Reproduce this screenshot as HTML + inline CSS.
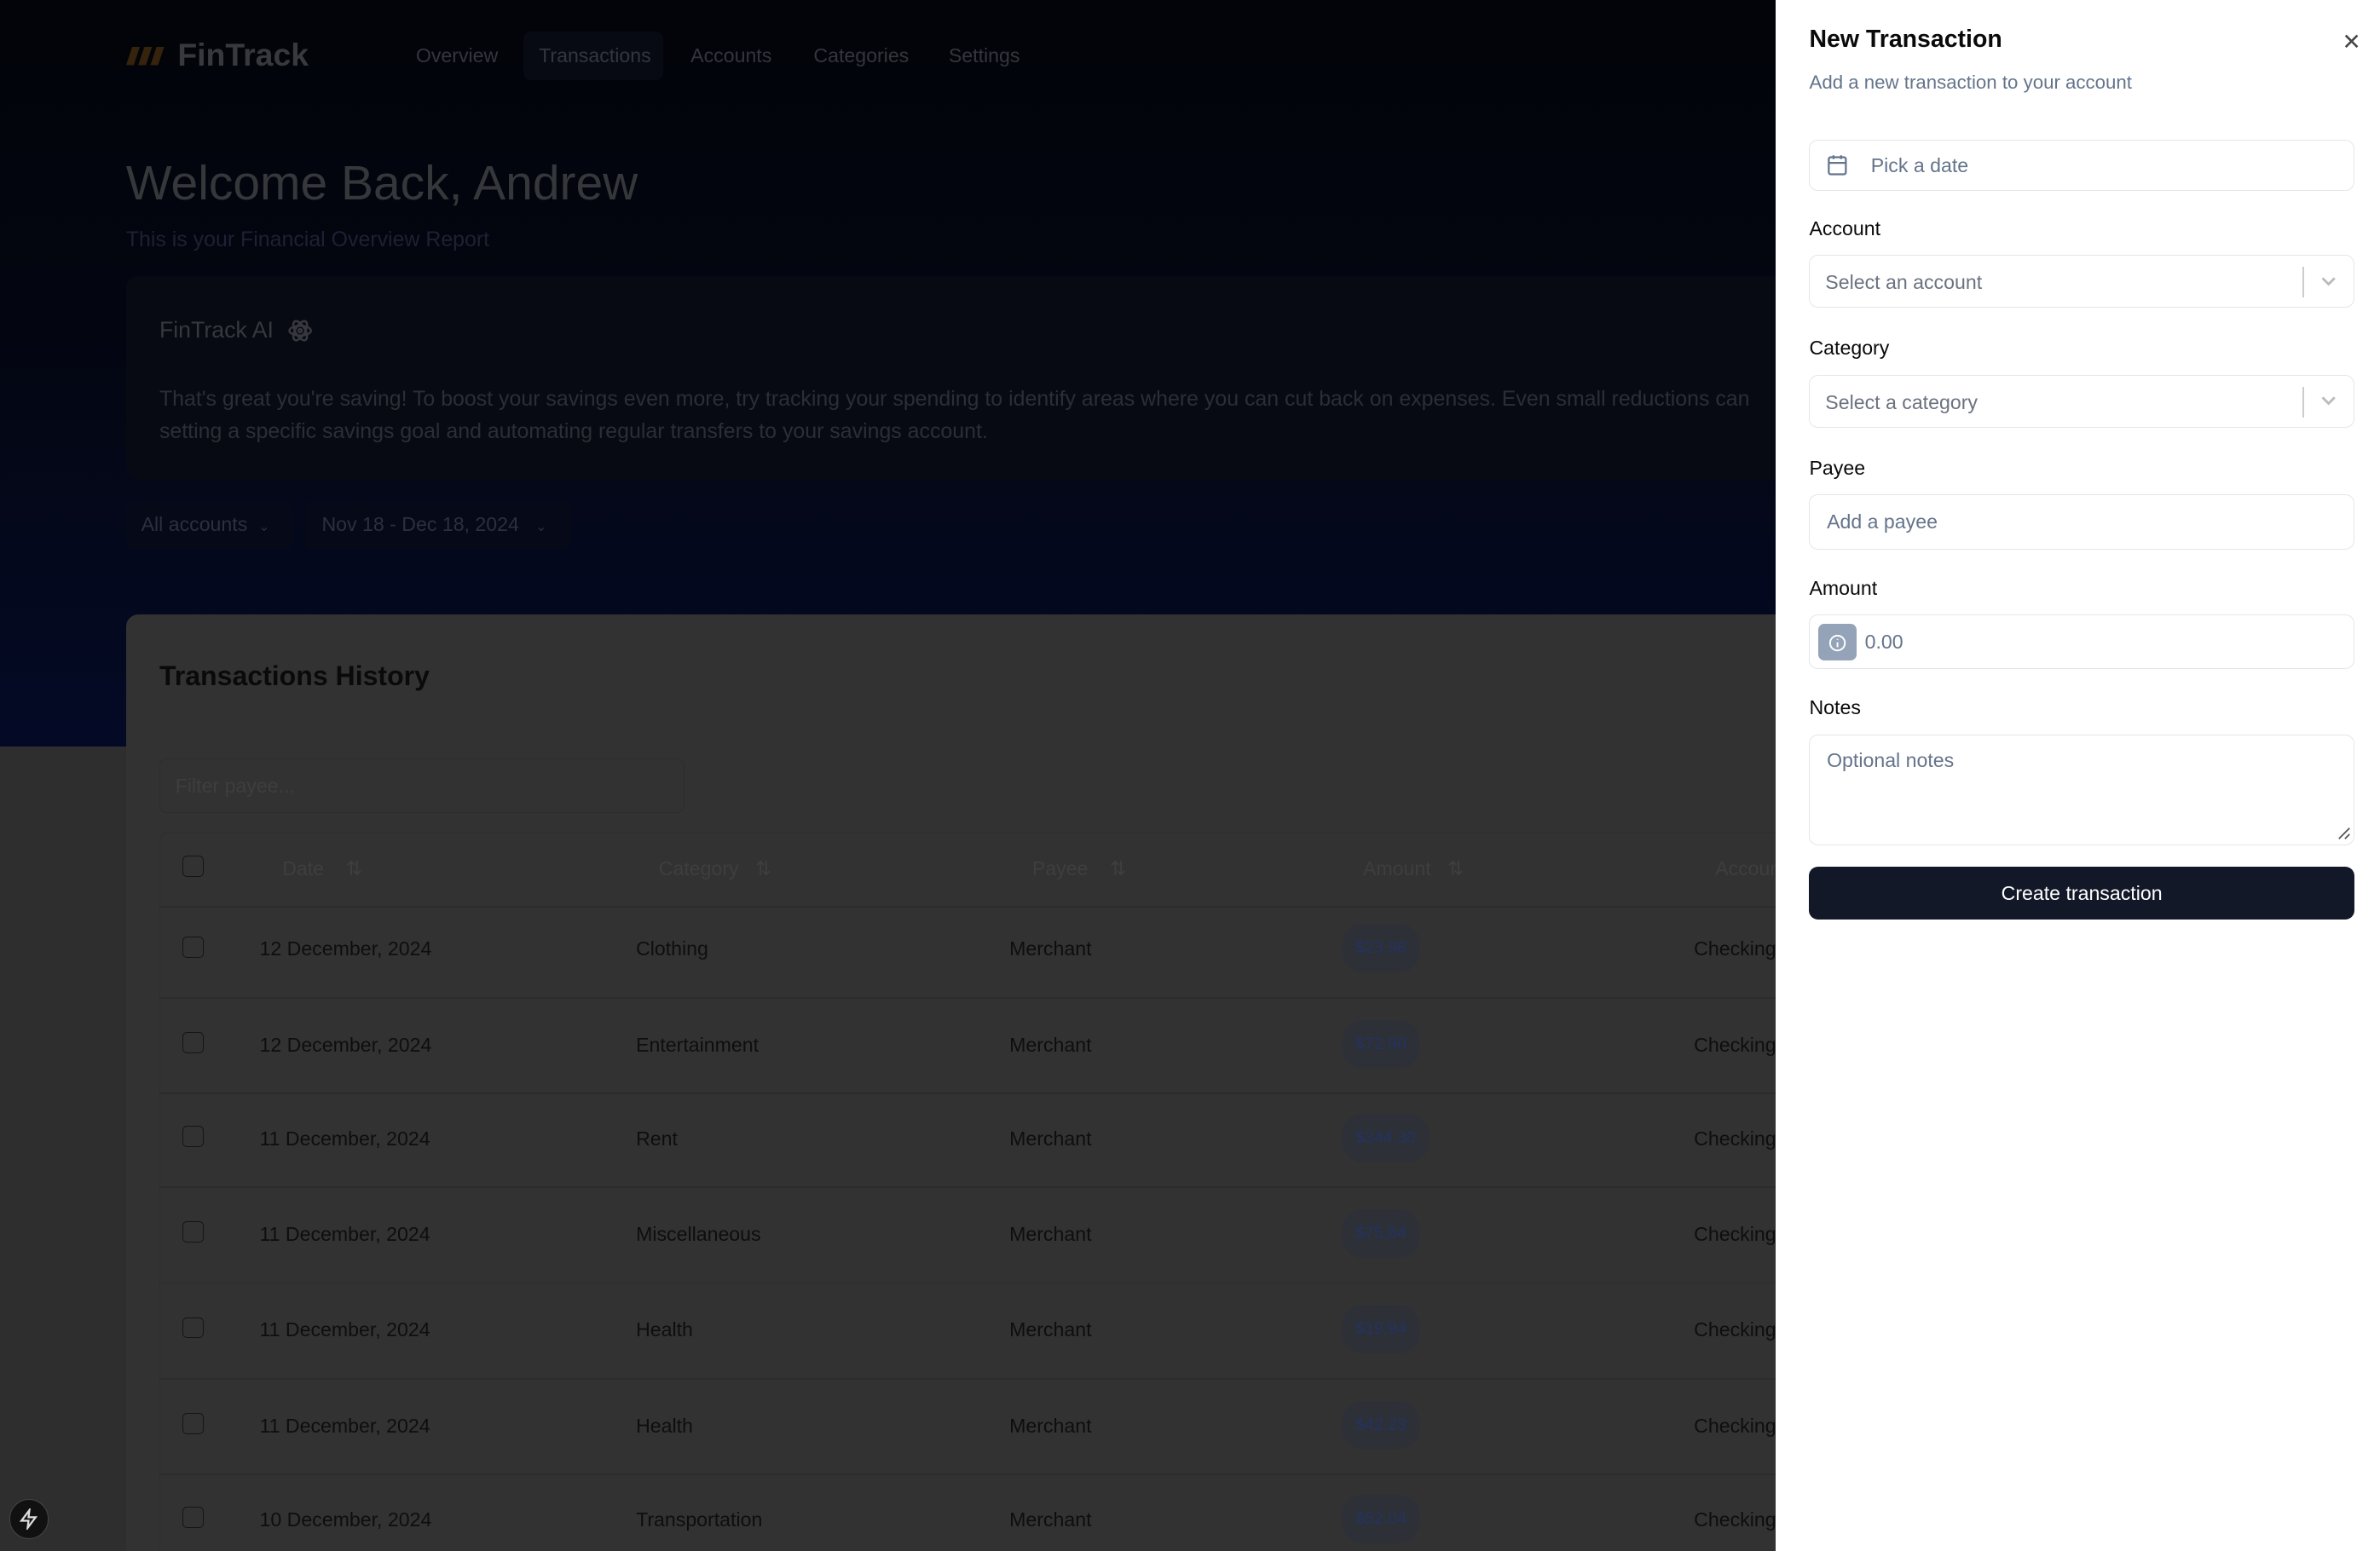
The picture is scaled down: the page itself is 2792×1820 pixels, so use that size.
<!DOCTYPE html>
<html><head><meta charset="utf-8"><style>
*{box-sizing:border-box;margin:0;padding:0}
html,body{width:2792px;height:1820px;overflow:hidden;background:#2e2e2e}
#w{position:absolute;left:0;top:0;width:1568px;height:1022px;zoom:1.78061;font-family:"Liberation Sans",Arial,sans-serif;overflow:hidden}
.a{position:absolute}
#hdr{left:0;top:0;width:1568px;height:492px;background:linear-gradient(180deg,#020409 0%,#030611 45%,#040a26 100%)}
.nav{top:29px;font-size:13px;color:#33363e}
.card{left:83px;top:405px;width:1100px;height:617px;background:#323232;border-radius:8px 8px 0 0}
.th{font-size:13px;color:#3e3e3e}
.td{font-size:13px;color:#0e0e0e}
.cb{width:14px;height:14px;border:1px solid #151515;border-radius:3px}
.pill{background:#2d3037;color:#243360;font-size:11px;border-radius:14px;height:32px;line-height:32px;padding:0 9px}
.sep{left:105px;width:1100px;height:1px;background:#2c2c2c}
#p{left:1170px;top:0;width:398px;height:1022px;background:#fff}
.lbl{font-size:13px;color:#0a0a0a;left:22px}
.inp{left:22px;width:359px;border:1px solid #e3e6ea;border-radius:6px;font-size:13px;color:#6b7280}
</style></head><body><div id="w">
<div id="hdr" class="a"></div>
<svg class="a" style="left:83px;top:31px" width="26" height="12" viewBox="0 0 26 12"><path d="M4 0h5l-4 12H0zM12 0h5l-4 12H8zM20 0h5l-4 12h-5z" fill="#35240b"/></svg>
<div class="a" style="left:117px;top:24px;font-size:21px;font-weight:bold;color:#38393d">FinTrack</div>
<div class="a" style="left:345px;top:21px;width:92px;height:32px;background:#070a13;border-radius:5px"></div>
<div class="a nav" style="left:274px">Overview</div>
<div class="a nav" style="left:355px">Transactions</div>
<div class="a nav" style="left:455px">Accounts</div>
<div class="a nav" style="left:536px">Categories</div>
<div class="a nav" style="left:625px">Settings</div>
<div class="a" style="left:83px;top:102px;font-size:32px;color:#36373b">Welcome Back, Andrew</div>
<div class="a" style="left:83px;top:150px;font-size:14px;color:#1d2133">This is your Financial Overview Report</div>
<div class="a" style="left:83px;top:182px;width:1100px;height:134px;background:#080a13;border-radius:8px"></div>
<div class="a" style="left:105px;top:209px;font-size:15px;color:#37383d">FinTrack AI</div>
<svg class="a" style="left:189px;top:209px" width="17" height="18" viewBox="0 0 24 24" fill="none" stroke="#37383d" stroke-width="2"><circle cx="12" cy="12" r="1.5"/><ellipse cx="12" cy="12" rx="10" ry="4.5"/><ellipse cx="12" cy="12" rx="10" ry="4.5" transform="rotate(60 12 12)"/><ellipse cx="12" cy="12" rx="10" ry="4.5" transform="rotate(120 12 12)"/></svg>
<div class="a" style="left:105px;top:253px;width:1080px;font-size:14px;line-height:21px;color:#2c2e35;white-space:nowrap">That's great you're saving! To boost your savings even more, try tracking your spending to identify areas where you can cut back on expenses. Even small reductions can<br>setting a specific savings goal and automating regular transfers to your savings account.</div>
<div class="a" style="left:83px;top:330px;width:110px;height:32px;background:#060918;border-radius:5px;font-size:13px;color:#2c2f40;padding:8px 10px">All accounts&nbsp; <span style="font-size:9px">&#8964;</span></div>
<div class="a" style="left:201px;top:330px;width:176px;height:32px;background:#060918;border-radius:5px;font-size:13px;color:#2c2f40;padding:8px 11px">Nov 18 - Dec 18, 2024&nbsp;&nbsp; <span style="font-size:9px">&#8964;</span></div>
<div class="a card"></div>
<div class="a" style="left:105px;top:435px;font-size:18px;font-weight:bold;color:#0a0a0a">Transactions History</div>
<div class="a" style="left:105px;top:500px;width:346px;height:36px;border:1px solid #2d2d2d;border-radius:5px;font-size:13px;color:#3e3e3e;padding:10px 10px">Filter payee...</div>
<div class="a" style="left:105px;top:548px;width:1100px;height:480px;border:1px solid #2e2e2e;border-radius:6px"></div>
<div class="a cb" style="left:120px;top:564px"></div>
<div class="a th" style="left:186px;top:565px">Date &nbsp;&nbsp;&nbsp;⇅</div>
<div class="a th" style="left:434px;top:565px">Category &nbsp;&nbsp;⇅</div>
<div class="a th" style="left:680px;top:565px">Payee &nbsp;&nbsp;&nbsp;⇅</div>
<div class="a th" style="left:898px;top:565px">Amount &nbsp;&nbsp;⇅</div>
<div class="a th" style="left:1130px;top:565px">Account</div>
<div class="a sep" style="top:597px"></div>
<div class="a cb" style="left:120px;top:617px"></div><div class="a td" style="left:171px;top:618px">12 December, 2024</div><div class="a td" style="left:419px;top:618px">Clothing</div><div class="a td" style="left:665px;top:618px">Merchant</div><div class="a pill" style="left:884px;top:609px">$23.96</div><div class="a td" style="left:1116px;top:618px">Checking</div><div class="a sep" style="top:657px"></div>
<div class="a cb" style="left:120px;top:680px"></div><div class="a td" style="left:171px;top:681px">12 December, 2024</div><div class="a td" style="left:419px;top:681px">Entertainment</div><div class="a td" style="left:665px;top:681px">Merchant</div><div class="a pill" style="left:884px;top:672px">$72.90</div><div class="a td" style="left:1116px;top:681px">Checking</div><div class="a sep" style="top:720px"></div>
<div class="a cb" style="left:120px;top:742px"></div><div class="a td" style="left:171px;top:743px">11 December, 2024</div><div class="a td" style="left:419px;top:743px">Rent</div><div class="a td" style="left:665px;top:743px">Merchant</div><div class="a pill" style="left:884px;top:734px">$344.30</div><div class="a td" style="left:1116px;top:743px">Checking</div><div class="a sep" style="top:782px"></div>
<div class="a cb" style="left:120px;top:805px"></div><div class="a td" style="left:171px;top:806px">11 December, 2024</div><div class="a td" style="left:419px;top:806px">Miscellaneous</div><div class="a td" style="left:665px;top:806px">Merchant</div><div class="a pill" style="left:884px;top:797px">$75.84</div><div class="a td" style="left:1116px;top:806px">Checking</div><div class="a sep" style="top:845px"></div>
<div class="a cb" style="left:120px;top:868px"></div><div class="a td" style="left:171px;top:869px">11 December, 2024</div><div class="a td" style="left:419px;top:869px">Health</div><div class="a td" style="left:665px;top:869px">Merchant</div><div class="a pill" style="left:884px;top:860px">$19.94</div><div class="a td" style="left:1116px;top:869px">Checking</div><div class="a sep" style="top:908px"></div>
<div class="a cb" style="left:120px;top:931px"></div><div class="a td" style="left:171px;top:932px">11 December, 2024</div><div class="a td" style="left:419px;top:932px">Health</div><div class="a td" style="left:665px;top:932px">Merchant</div><div class="a pill" style="left:884px;top:923px">$42.23</div><div class="a td" style="left:1116px;top:932px">Checking</div><div class="a sep" style="top:971px"></div>
<div class="a cb" style="left:120px;top:993px"></div><div class="a td" style="left:171px;top:994px">10 December, 2024</div><div class="a td" style="left:419px;top:994px">Transportation</div><div class="a td" style="left:665px;top:994px">Merchant</div><div class="a pill" style="left:884px;top:985px">$52.04</div><div class="a td" style="left:1116px;top:994px">Checking</div>
<div class="a" style="left:6px;top:988px;width:26px;height:26px;border-radius:50%;background:#111;border:1px solid #444"></div>
<svg class="a" style="left:12px;top:994px" width="14" height="14" viewBox="0 0 24 24" fill="none" stroke="#ddd" stroke-width="2.2"><path d="M13 2L4 14h8l-1 8 9-12h-8z"/></svg>
<div id="p" class="a">
<div class="a" style="left:22px;top:17px;font-size:16px;font-weight:bold;color:#0a0a0a">New Transaction</div>
<div class="a" style="left:373px;top:19px;font-size:15px;color:#444">✕</div>
<div class="a" style="left:22px;top:47px;font-size:12.5px;color:#64748b">Add a new transaction to your account</div>
<div class="a inp" style="top:92px;height:34px;padding:9px 0 0 40px;color:#64748b">Pick a date</div>
<svg class="a" style="left:33px;top:101px" width="15" height="15" viewBox="0 0 24 24" fill="none" stroke="#64748b" stroke-width="2"><rect x="3" y="4" width="18" height="18" rx="2"/><path d="M16 2v4M8 2v4M3 10h18"/></svg>
<div class="a lbl" style="top:143px">Account</div>
<div class="a inp" style="top:168px;height:35px;padding:10px 0 0 10px">Select an account</div>
<div class="a" style="left:347px;top:176px;width:1px;height:20px;background:#ccc"></div>
<svg class="a" style="left:358px;top:180px" width="12" height="10" viewBox="0 0 12 8" fill="none" stroke="#bbb" stroke-width="1.6"><path d="M2 2l4 4 4-4"/></svg>
<div class="a lbl" style="top:222px">Category</div>
<div class="a inp" style="top:247px;height:35px;padding:10px 0 0 10px">Select a category</div>
<div class="a" style="left:347px;top:255px;width:1px;height:20px;background:#ccc"></div>
<svg class="a" style="left:358px;top:259px" width="12" height="10" viewBox="0 0 12 8" fill="none" stroke="#bbb" stroke-width="1.6"><path d="M2 2l4 4 4-4"/></svg>
<div class="a lbl" style="top:301px">Payee</div>
<div class="a inp" style="top:326px;height:36px;padding:10px 0 0 11px;color:#64748b">Add a payee</div>
<div class="a lbl" style="top:380px">Amount</div>
<div class="a inp" style="top:405px;height:36px;padding:10px 0 0 36px;color:#64748b">0.00</div>
<div class="a" style="left:28px;top:411px;width:25px;height:24px;border-radius:4px;background:#94a3b8"></div>
<svg class="a" style="left:34px;top:417px" width="13" height="13" viewBox="0 0 24 24" fill="none" stroke="#fff" stroke-width="2"><circle cx="12" cy="12" r="9"/><path d="M12 11v6M12 7v1"/></svg>
<div class="a lbl" style="top:459px">Notes</div>
<div class="a inp" style="top:484px;height:73px;padding:9px 0 0 11px;color:#64748b">Optional notes</div>
<svg class="a" style="left:370px;top:545px" width="9" height="9" viewBox="0 0 9 9" stroke="#555" stroke-width="1"><path d="M1 8L8 1M5 8L8 5"/></svg>
<div class="a" style="left:22px;top:571px;width:359px;height:35px;background:#131829;border-radius:6px;color:#fff;font-size:13px;text-align:center;line-height:35px">Create transaction</div>
</div>
</div></body></html>
